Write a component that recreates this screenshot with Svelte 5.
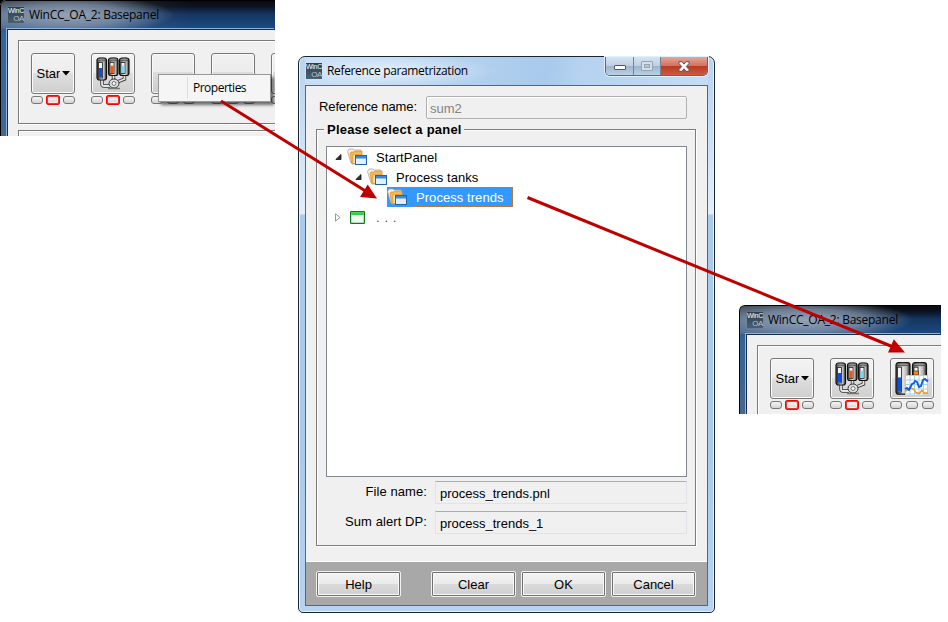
<script lang="ts">
	type Icon = 'tanks' | 'trends' | null;

	interface ToolButton {
		label?: string;
		icon?: Icon;
		alert?: boolean;
	}

	const before: ToolButton[] = [
		{ label: 'Start', alert: true },
		{ icon: 'tanks', alert: true },
		{},
		{},
		{}
	];
	const after: ToolButton[] = [
		{ label: 'Start', alert: true },
		{ icon: 'tanks', alert: true },
		{ icon: 'trends' }
	];

	let selected = $state('Process trends');
	let nodes = [
		{ name: 'StartPanel', level: 0, kind: 'folder', arrow: 'open' },
		{ name: 'Process tanks', level: 1, kind: 'folder', arrow: 'open' },
		{ name: 'Process trends', level: 2, kind: 'folder', arrow: 'none' },
		{ name: '. . .', level: 0, kind: 'panel', arrow: 'closed' }
	];
</script>

{#snippet logo()}
	<span class="logo">
		<b>WinC</b>
		<em>OA</em>
	</span>
{/snippet}

{#snippet tank(x: number, y: number, w: number, h: number, level: string)}
	<rect {x} {y} width={w} height={h} rx="2.5" fill="url(#steel)" stroke="#111" stroke-width="1.2" />
	<ellipse cx={x + w / 2} cy={y + 1.6} rx={w / 2 - 0.8} ry="1.5" fill="#8f8f8f" stroke="#222" stroke-width=".6" />
	<rect x={x + 1.500} y={y + 4.500} width="4" height={h - 6.500} fill="#f4f4f4" stroke="#222" stroke-width=".8" />
	<rect x={x + 2} y={y + h / 2 - 1} width="3" height={h / 2 - 1.500} fill={level} />
{/snippet}

{#snippet toolIcon(icon: Icon)}
	<svg width="34" height="34" viewBox="0 0 34 34">
		{#if icon === 'tanks'}
			<path d="M6 23v4q0 2 2 2h6M17.500 18v5M28.500 18v4l-6 2.500" fill="none" stroke="#333" stroke-width="3.400" />
			<path d="M6 23v4q0 2 2 2h6M17.500 18v5M28.500 18v4l-6 2.500" fill="none" stroke="#e6e6e6" stroke-width="1.800" />
			{@render tank(1, 1, 9.5, 22, '#0f4fe0')}
			{@render tank(12.5, 1, 9.5, 17.5, '#f0560c')}
			{@render tank(23.5, 1, 9.5, 17.5, '#7fd9ee')}
			<ellipse cx="18" cy="26.500" rx="5" ry="4.500" fill="#e0e0e0" stroke="#333" />
			<circle cx="18" cy="26.500" r="2" fill="#f6f6f6" stroke="#555" stroke-width=".8" />
			<path d="M12 31.500h12" stroke="#777" stroke-width="1.400" />
		{:else}
			{@render tank(1, 0.7, 14, 31.5, '#0f4fe0')}
			{@render tank(17.5, 0.7, 14, 20, '#f28a13')}
			<path d="M18.500 9h5v4h-5z" fill="#f28a13" stroke="#222" stroke-width=".6" />
			<rect x="10" y="13" width="23" height="20" fill="#fff" />
			<path d="M10.500 13v20M15 13v20M19.500 13v20M24 13v20M28.500 13v20M32.500 13v20M10 13.500h23M10 18h23M10 22.500h23M10 27h23M10 32h23" stroke="#9bd1e3" stroke-width=".9" />
			<path d="M10 29.500l3-2 2-2 4 2 2 3 3 1 3-3 3 3 3-1" fill="none" stroke="#e99a32" stroke-width="1.600" />
			<path d="M10 27l2-1 2 2 3-6 2-1 1-2 2 1 2 5 2-1 2-6 2-1 2 2 1-1" fill="none" stroke="#1459df" stroke-width="1.900" />
		{/if}
	</svg>
{/snippet}

{#snippet toolbar(buttons: ToolButton[])}
	<div class="base-title">
		{@render logo()}
		<span class="base-name">WinCC_OA_2: Basepanel</span>
	</div>
	<div class="base-client">
		<div class="tools">
			{#each buttons as btn}
				<div class="tool">
					<button class="tool-btn" class:blank={!btn.label && !btn.icon}>
						{#if btn.label}
							<span class="start">{btn.label}</span>
							<svg width="8" height="5" viewBox="0 0 8 5"><path d="M0 0h8L4 4.6z" fill="#000" /></svg>
						{:else if btn.icon}
							{@render toolIcon(btn.icon)}
						{/if}
					</button>
					<div class="leds">
						<i></i>
						<i class:alert={btn.alert}></i>
						<i></i>
					</div>
				</div>
			{/each}
		</div>
		<div class="tools next"></div>
	</div>
{/snippet}

<div class="scene">
	<!-- shared gradient for the tank symbols -->
	<svg class="defs" width="0" height="0">
		<linearGradient id="steel">
			<stop offset="0" stop-color="#4a4a4a" />
			<stop offset=".5" stop-color="#e6e6e6" />
			<stop offset=".75" stop-color="#b4b4b4" />
			<stop offset="1" stop-color="#222" />
		</linearGradient>
	</svg>

	<section class="base first">
		{@render toolbar(before)}
		<div class="menu">
			<div class="menu-item">Properties</div>
		</div>
	</section>

	<section class="dialog">
		<header class="dialog-title">
			{@render logo()}
			<span class="dialog-name">Reference parametrization</span>
			<div class="controls">
				<button class="min" aria-label="Minimize">
					<svg width="12" height="6" viewBox="0 0 12 6"><rect x=".5" y=".5" width="11" height="4" rx=".5" fill="#fff" stroke="#4d5666" /></svg>
				</button>
				<button class="max" aria-label="Maximize">
					<svg width="12" height="10" viewBox="0 0 12 10"><rect x=".5" y=".5" width="11" height="9" rx=".5" fill="#d5dfe9" stroke="#95a2b2" /><rect x="3.5" y="3.5" width="5" height="3" fill="#b7c7d7" stroke="#95a2b2" /></svg>
				</button>
				<button class="close" aria-label="Close">
					<svg width="12" height="11" viewBox="0 0 12 11"><path d="M1 .7h3l2 2.5L8 .7h3v1.8L8.300 5.500 11 8.500v1.800H8L6 7.800l-2 2.500H1V8.500l2.700-3L1 2.500z" fill="#fff" stroke="#53545f" /></svg>
				</button>
			</div>
		</header>

		<div class="client">
			<div class="form">
				<div class="ref">
					<label for="ref">Reference name:</label>
					<div class="ref-field" id="ref">sum2</div>
				</div>

				<div class="group">
					<div class="legend"><span>Please select a panel</span></div>
					<div class="tree">
						{#each nodes as node}
							<div class="row level-{node.level}" class:selected={node.name === selected}>
								<span class="twist">
									{#if node.arrow === 'open'}
										<svg width="7" height="6" viewBox="0 0 7 6"><path d="M6 .5v5H.8z" fill="#333" stroke="#111" stroke-width=".8" /></svg>
									{:else if node.arrow === 'closed'}
										<svg width="6" height="9" viewBox="0 0 6 9"><path d="M.5.8v7.400L5 4.500z" fill="#fff" stroke="#999" /></svg>
									{/if}
								</span>
								<span class="icon">
									{#if node.kind === 'folder'}
										<svg width="20" height="18" viewBox="0 0 20 18">
											<path d="M.5 3.500 2 1h4l1 1h7v3L6 15H4z" fill="#f3efe8" stroke="#b5a894" stroke-width=".8" />
											<path d="M3 5.500 4 4h3l1-1h7v9l-8 4H5z" fill="#f6b850" stroke="#dc9638" stroke-width=".8" />
											<path d="M6 6.500h9v4l-7 5H6z" fill="#ffe9ae" stroke="#e09a40" stroke-width=".8" />
											<rect x="8.500" y="7.500" width="11" height="9" fill="#e2effc" stroke="#1f65ae" />
											<rect x="9" y="8" width="10" height="2.500" fill="#3a8add" />
										</svg>
									{:else}
										<svg width="15" height="13" viewBox="0 0 15 13">
											<rect x=".6" y=".6" width="13.800" height="11.800" rx=".6" fill="#f2fbf2" stroke="#087a18" stroke-width="1.200" />
											<rect x="1.200" y="1.200" width="12.600" height="2.800" fill="#35cf48" />
										</svg>
									{/if}
								</span>
								<span class="name" class:dots={node.kind === 'panel'}>{node.name}</span>
							</div>
						{/each}
					</div>
					<div class="pair">
						<span>File name:</span>
						<div class="flat">process_trends.pnl</div>
					</div>
					<div class="pair">
						<span>Sum alert DP:</span>
						<div class="flat">process_trends_1</div>
					</div>
				</div>
			</div>

			<footer>
				<button class="push help">Help</button>
				<button class="push">Clear</button>
				<button class="push">OK</button>
				<button class="push">Cancel</button>
			</footer>
		</div>
	</section>

	<section class="base second">
		{@render toolbar(after)}
	</section>

	<svg class="arrows" width="948" height="622" viewBox="0 0 948 622">
		<g fill="#c00000" stroke="#c00000">
			<path d="M221 101 365.500 191" stroke-width="3" />
			<path d="M377 198.500 367.700 184.500 360 197z" stroke="none" />
			<path d="M527.500 197.500 892 346.500" stroke-width="3" />
			<path d="M905 352.500 893.800 339.300 888 352.500z" stroke="none" />
		</g>
	</svg>
</div>

<style>
	:global(body) {
		background: #fff;
	}

	.scene {
		position: relative;
		width: 948px;
		height: 622px;
		overflow: hidden;
		background: #fff;
		font: 13px/20px 'Liberation Sans', Arial, sans-serif;
		color: #000;
	}

	svg {
		display: block;
		flex: none;
	}

	button {
		box-sizing: border-box;
		margin: 0;
		padding: 0;
		font: inherit;
		color: inherit;
	}

	.defs,
	.arrows {
		position: absolute;
		top: 0;
		left: 0;
		pointer-events: none;
	}

	.logo {
		display: flex;
		flex: none;
		flex-direction: column;
		width: 16px;
		height: 16px;
		background: linear-gradient(#2f3f4b, #4a5f6e);
		font: 7px/8px 'Liberation Sans', Arial, sans-serif;
	}

	.logo b {
		font-weight: normal;
		letter-spacing: -0.3px;
		color: #fff;
	}

	.logo em {
		align-self: flex-end;
		font-style: normal;
		font-size: 8px;
		letter-spacing: -0.4px;
		color: #b4c3cd;
	}

	/* Base panel windows, cut off on the right and bottom */
	.base {
		position: absolute;
		box-sizing: border-box;
		display: flex;
		flex-direction: column;
		overflow: hidden;
		border-top: 1px solid #000;
		border-left: 1px solid #000;
		border-top-left-radius: 6px;
		background: linear-gradient(#3a4a5e 0, #34659b 36px, #3a6497 70px, #45678f 100%);
		box-shadow: -3px -3px 0 #000;
	}

	.first {
		top: 0;
		left: 0;
		width: 275px;
		height: 136px;
	}

	.second {
		top: 305px;
		left: 739px;
		width: 202px;
		height: 109px;
		box-shadow: none;
	}

	.base-title {
		display: flex;
		flex: none;
		align-items: center;
		height: 28px;
		padding-left: 7px;
		gap: 1px;
		background:
			radial-gradient(ellipse 105px 20px at 68px 14px, rgba(160, 172, 188, 0.9) 0, rgba(130, 148, 172, 0.75) 55%, transparent 100%),
			linear-gradient(90deg, rgba(140, 155, 170, 0.4), transparent 70%),
			linear-gradient(#080a10 0, #0c1422 6px, #143561 13px, #1c4b84 28px);
	}

	.base-name {
		padding: 0 4px 0;
		font: 12px/18px 'Open Sans', 'Noto Sans', sans-serif;
		letter-spacing: -0.25px;
		white-space: nowrap;
	}

	.base-client {
		display: flex;
		flex: 1 0 auto;
		flex-direction: column;
		gap: 6px;
		margin-left: 6px;
		padding: 10px 0 0 10px;
		border: 1px solid #172c48;
		border-width: 1px 0 0 1px;
		box-shadow: -1px -1px 0 #8fb3da;
		background: #f0f0f0;
	}

	.tools {
		display: flex;
		flex: none;
		gap: 16px;
		box-sizing: border-box;
		height: 84px;
		padding: 12px;
		border: 1px solid #7b7b7b;
		border-right: 0;
		box-shadow: inset 1px 1px 0 #fff, 0 1px 0 #fff;
	}

	.next {
		height: 40px;
	}

	.tool {
		flex: none;
		width: 44px;
	}

	.tool-btn {
		display: flex;
		align-items: center;
		justify-content: center;
		width: 44px;
		height: 41px;
		border: 1px solid #777;
		border-radius: 3px;
		background: linear-gradient(#f3f3f3 0, #ececec 48%, #dedede 50%, #cfcfcf 100%);
		box-shadow: inset 0 0 0 1px #fafafa;
	}

	.tool-btn.blank {
		background: linear-gradient(#f1f1f1 0, #ececec 45%, #dcdcdc 47%, #cdcdcd 100%);
	}

	.start {
		width: 23px;
		margin-right: 2px;
		overflow: hidden;
		text-align: left;
	}

	.leds {
		display: flex;
		gap: 4px;
		margin-top: 2px;
	}

	.leds i {
		box-sizing: border-box;
		width: 12px;
		height: 8px;
		border: 1px solid #777;
		border-radius: 3px;
		background: linear-gradient(#f5f5f5, #d4d4d4);
	}

	.leds i.alert {
		border-radius: 2px;
		box-shadow: 0 0 0 1px #f00, inset 0 0 0 1px #eee;
		border-color: #e33;
		outline: 1px solid #f00;
	}

	.menu {
		position: absolute;
		top: 73px;
		left: 157px;
		box-sizing: border-box;
		width: 113px;
		height: 28px;
		padding: 2px;
		border: 1px solid #979797;
		background: #f5f5f5;
		box-shadow: 3px 3px 3px rgba(0, 0, 0, 0.55);
	}

	.menu-item {
		margin-left: 26px;
		padding-left: 5px;
		border-left: 1px solid #dcdcdc;
		font: 12px/22px 'Open Sans', 'Noto Sans', sans-serif;
		letter-spacing: -0.5px;
	}

	/* Reference dialog */
	.dialog {
		position: absolute;
		top: 56px;
		left: 298px;
		box-sizing: border-box;
		display: flex;
		flex-direction: column;
		width: 417px;
		height: 557px;
		padding: 0 6px 6px;
		border: 1px solid #1b2530;
		border-radius: 7px 7px 5px 5px;
		background: linear-gradient(#b9d3f0 0, #c4dcf4 60px, #e2eefa 157px, #a9caeb 158px, #a9caeb 70%, #b6d3f1 100%);
		box-shadow: inset 0 0 0 1px #e7f2fc;
	}

	.dialog-title {
		display: flex;
		flex: none;
		align-items: center;
		height: 28px;
		padding-left: 1px;
		background:
			radial-gradient(ellipse 110px 17px at 80px 14px, rgba(235, 244, 253, 0.85), transparent),
			linear-gradient(100deg, #c7def5 0, #a9caec 60%, #b5d2f0 68%, #c5dcf4 100%);
	}

	.dialog-name {
		flex: 1;
		padding-left: 5px;
		font: 12px/18px 'Open Sans', 'Noto Sans', sans-serif;
		letter-spacing: -0.34px;
	}

	.controls {
		display: flex;
		align-self: flex-start;
		height: 18px;
		border: 1px solid #5c6978;
		border-top: 0;
		border-radius: 0 0 5px 5px;
		overflow: hidden;
		box-shadow: 0 0 0 1px #e1eefb;
	}

	.controls button {
		display: flex;
		align-items: center;
		justify-content: center;
		height: 18px;
		border: 0;
		border-right: 1px solid #758397;
		background: linear-gradient(#d6e3f1 0, #bfd0e2 48%, #9db3ca 50%, #b9d0e5 100%);
	}

	.controls .min {
		width: 28px;
		padding-top: 4px;
	}

	.controls .max {
		width: 27px;
	}

	.controls .close {
		width: 46px;
		border: 0;
		background: linear-gradient(#e3a698 0, #d37260 48%, #b83a22 50%, #cd5a3f 100%);
	}

	.client {
		display: flex;
		flex: 1;
		flex-direction: column;
		border: 1px solid #5a6675;
		background: #f0f0f0;
	}

	.form {
		flex: 1;
		padding: 10px 11px 0 10px;
		border-bottom: 1px solid #fff;
	}

	.ref {
		display: flex;
		margin: 0 9px 0 3px;
	}

	.ref label {
		width: 107px;
		line-height: 22px;
		letter-spacing: -0.12px;
	}

	.ref-field {
		box-sizing: border-box;
		flex: 1;
		height: 23px;
		padding: 2px 3px 0;
		border: 1px solid #b0b0b0;
		border-radius: 2px;
		box-shadow: inset 1px 1px 0 #fff;
		color: #838383;
	}

	.group {
		box-sizing: border-box;
		height: 417px;
		margin-top: 10px;
		padding: 0 8px 0 9px;
		border: 1px solid #7b7b7b;
		box-shadow: inset 1px 1px 0 #fff, 1px 1px 0 #fff;
	}

	.legend {
		display: flex;
		height: 16px;
		line-height: 16px;
		font-weight: bold;
		letter-spacing: 0.22px;
	}

	.legend span {
		height: 16px;
		margin-top: -8px;
		margin-left: -2px;
		padding: 0 2px 0 3px;
		background: #f0f0f0;
	}

	.tree {
		box-sizing: border-box;
		height: 331px;
		margin-bottom: 4px;
		border: 1px solid #828790;
		background: #fff;
	}

	.row {
		display: flex;
		align-items: center;
		height: 20px;
		letter-spacing: 0.06px;
	}

	.level-1 {
		padding-left: 20px;
	}

	.level-2 {
		padding-left: 40px;
	}

	.twist {
		display: flex;
		justify-content: center;
		width: 20px;
		padding-left: 2px;
		box-sizing: border-box;
	}

	.icon {
		display: flex;
		align-items: center;
		justify-content: center;
		height: 20px;
		width: 26px;
		padding-right: 6px;
		box-sizing: border-box;
	}

	.name {
		height: 20px;
		padding: 1px 3px 0;
		box-sizing: border-box;
	}

	.name.dots {
		color: #555;
		letter-spacing: 0.6px;
	}

	.selected .icon {
		background: #3399ff;
	}

	.selected .name {
		width: 100px;
		border: 1px dotted #b5793c;
		padding: 0 2px;
		line-height: 20px;
		background: #3399ff;
		color: #fff;
	}

	.pair {
		display: flex;
		gap: 8px;
		height: 23px;
		margin-bottom: 7px;
	}

	.pair span {
		width: 101px;
		line-height: 22px;
		text-align: right;
		letter-spacing: 0.08px;
	}

	.flat {
		box-sizing: border-box;
		flex: 1;
		padding: 2px 4px 0;
		border: 1px solid #e2e3ea;
		border-top-color: #abadb3;
	}

	footer {
		display: flex;
		flex: none;
		gap: 5px;
		height: 43px;
		padding: 9px 10px 0;
		box-sizing: border-box;
		background: #a8a8a8;
	}

	.push {
		width: 85px;
		height: 26px;
		padding-top: 1px;
		border: 1px solid #f2f2f2;
		background: linear-gradient(#f3f3f3 0, #ebebeb 48%, #dadada 50%, #cfcfcf 100%);
		box-shadow: inset 0 0 0 1px #707070, inset 0 0 0 2px #f8f8f8;
		border-radius: 2px;
	}

	.help {
		margin-right: 25px;
	}
</style>
